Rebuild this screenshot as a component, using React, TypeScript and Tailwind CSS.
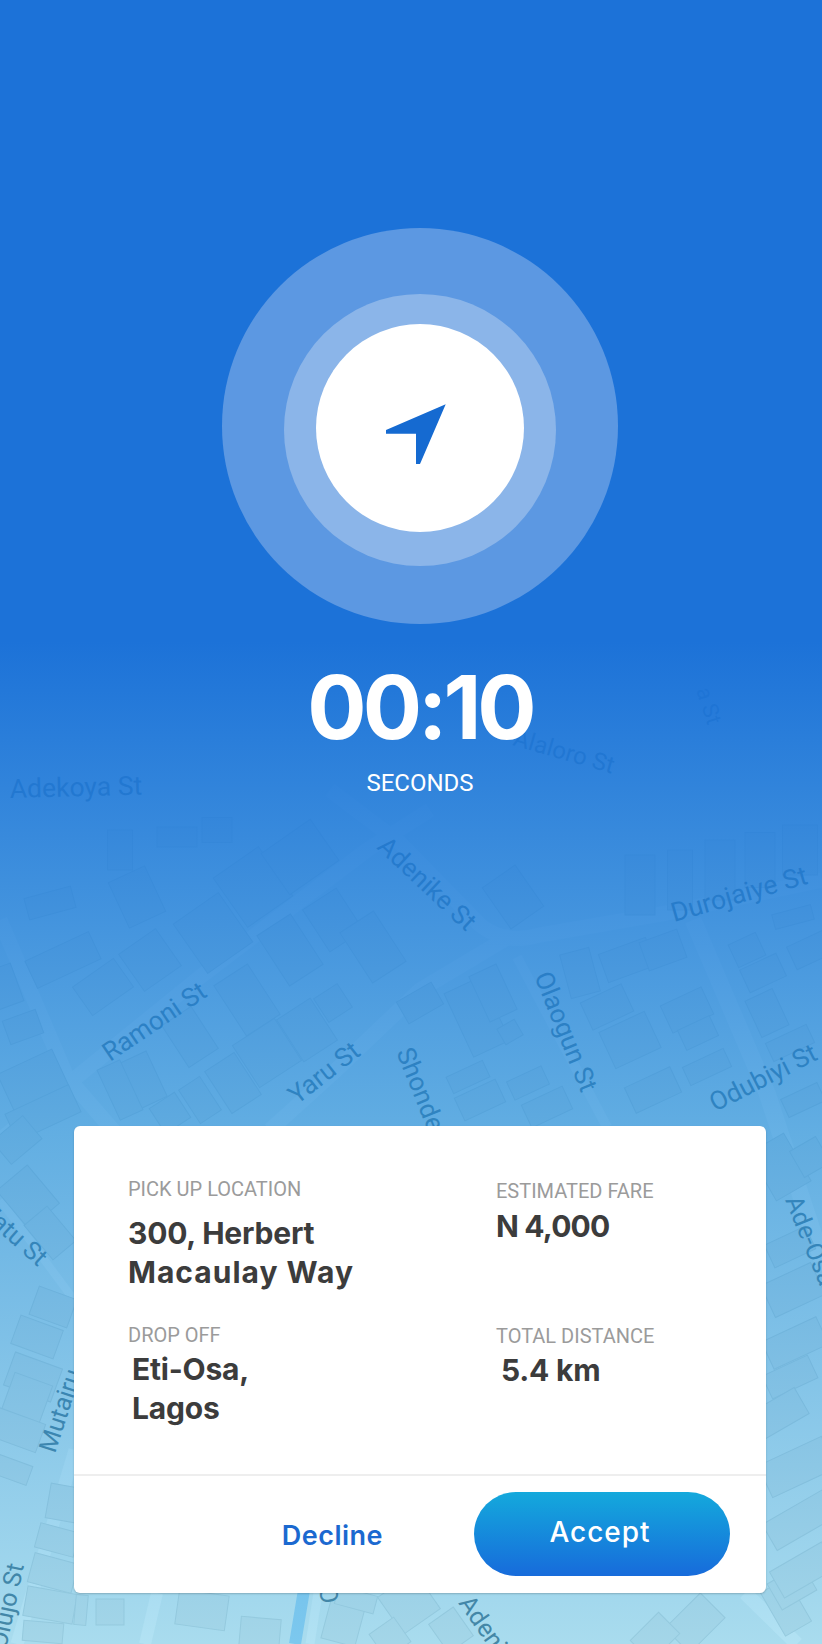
import React from 'react';

// [cx, cy, w, h, angle]
const buildings: number[][] = [
  [50, 903, 48, 22, -15], [63, 960, 70, 30, -25], [103, 987, 50, 35, -35], [150, 960, 45, 45, -35],
  [137, 897, 40, 50, -25], [213, 933, 55, 60, -35], [253, 887, 55, 60, -35], [300, 857, 60, 50, -35],
  [120, 850, 25, 40, 0], [177, 837, 40, 20, 0], [217, 830, 30, 25, 0],
  [247, 1000, 40, 60, -33], [290, 950, 40, 60, -33], [333, 920, 40, 50, -33], [373, 947, 40, 60, -33],
  [333, 1003, 28, 28, -33], [307, 1030, 40, 50, -33], [267, 1053, 50, 50, -33], [233, 1083, 35, 50, -33],
  [200, 1100, 25, 40, -33], [190, 1037, 35, 50, -33], [143, 1080, 30, 50, -25], [120, 1090, 25, 55, -25],
  [170, 1113, 30, 30, -33], [33, 1080, 60, 40, -25], [23, 1027, 35, 25, -20], [43, 1113, 70, 30, -25], [3, 987, 30, 40, -20],
  [420, 1003, 40, 25, -30], [477, 1017, 40, 70, -25], [510, 1032, 20, 18, -30], [493, 993, 30, 50, -25],
  [468, 1077, 40, 18, -25], [528, 1083, 38, 20, -25], [480, 1100, 45, 25, -25], [547, 1107, 45, 25, -25],
  [580, 973, 30, 45, -15], [627, 960, 50, 30, -20], [663, 950, 40, 30, -20], [607, 1007, 45, 30, -25],
  [630, 1040, 50, 40, -25], [687, 1010, 45, 30, -25], [698, 1033, 35, 22, -25], [707, 1067, 45, 20, -25],
  [653, 1090, 50, 28, -25], [763, 973, 40, 25, -25], [747, 950, 30, 25, -25], [767, 1013, 30, 40, -25],
  [790, 1043, 45, 20, -25], [793, 917, 40, 15, -15], [810, 950, 40, 25, -25], [803, 1100, 40, 20, -25],
  [640, 885, 30, 60, 0], [680, 880, 25, 60, 0], [720, 870, 30, 60, 0], [760, 860, 30, 55, 0], [800, 850, 35, 50, 0],
  [513, 897, 40, 50, -35], [28, 1197, 40, 50, -40], [17, 1140, 40, 30, -40], [50, 1233, 30, 45, -40],
  [53, 1307, 40, 30, 20], [37, 1337, 45, 30, 20], [33, 1377, 50, 35, 20], [27, 1398, 40, 40, 20], [17, 1430, 50, 30, 20],
  [13, 1470, 35, 20, 20], [63, 1503, 30, 35, 10], [57, 1540, 40, 25, 15], [53, 1573, 45, 30, 15], [50, 1605, 50, 30, 10], [43, 1632, 40, 20, 5],
  [110, 1612, 28, 26, 0], [81, 1610, 12, 30, 5], [202, 1610, 50, 35, 8], [260, 1633, 40, 30, 5], [343, 1623, 35, 40, 15],
  [356, 1600, 40, 18, 15], [409, 1603, 45, 45, -35], [451, 1630, 30, 35, -35], [390, 1638, 30, 30, -35],
  [695, 1623, 50, 35, -45], [655, 1637, 40, 30, -45], [786, 1607, 30, 50, -30], [792, 1587, 40, 30, -30],
  [780, 1167, 40, 55, -30], [810, 1157, 30, 30, -30], [790, 1247, 45, 25, -25], [793, 1290, 55, 35, -25],
  [795, 1343, 60, 30, -25], [790, 1377, 50, 25, -25], [780, 1413, 50, 30, -30], [797, 1467, 70, 35, -25],
  [800, 1520, 70, 30, -30], [803, 1570, 60, 30, -30],
];

const roads: { d: string; w: number }[] = [
  { d: 'M430 810 L367 850 L200 977 L73 1080 L0 1140', w: 15 },
  { d: 'M0 920 L67 1077 L130 1150', w: 15 },
  { d: 'M512 935 L420 990 L333 1073 L270 1130', w: 15 },
  { d: 'M330 790 L400 843 L480 925 Q505 945 540 935 L667 913 L822 880', w: 15 },
  { d: 'M693 920 L767 1093 L822 1260', w: 17 },
  { d: 'M517 957 L607 1127', w: 10 },
  { d: 'M75 1450 L17 1644', w: 13 },
  { d: 'M157 1593 L145 1644', w: 12 },
  { d: 'M318 1593 L310 1644', w: 9 },
  { d: 'M745 1593 L797 1644', w: 14 },
  { d: 'M0 1200 L74 1300', w: 8 },
];

// [text, x, y, rotation, size]
const labels: [string, number, number, number, number][] = [
  ['Adekoya St', 10, 798, -1.5, 26.5],
  ['Alaloro St', 512, 745, 16, 24],
  ['a St', 696, 690, 72, 22],
  ['Adenike St', 376, 848, 43, 26],
  ['Durojaiye St', 674, 922, -16, 26.5],
  ['Ramoni St', 110, 1062, -34, 26],
  ['Yaru St', 297, 1105, -38, 26],
  ['Shonde', 396, 1052, 68, 26],
  ['Olaogun St', 534, 976, 68, 26],
  ['Odubiyi St', 715, 1112, -27, 26],
  ['Ade-Osa', 785, 1200, 68, 25],
  ['Fatu St', -20, 1215, 42, 25],
  ['Mutairu', 55, 1454, -72, 25],
  ['Olujo St', 6, 1650, -78, 25],
  ['Bolaji O', 307, 1521, 80, 25],
  ['Adeniji', 458, 1603, 55, 25],
];

function MapBackground() {
  return (
    <svg className="absolute inset-0" width={822} height={1644} viewBox="0 0 822 1644" fill="none">
      {roads.map((r) => (
        <path key={r.d} d={r.d} stroke="#b2e2f3" strokeWidth={r.w} strokeLinejoin="round" />
      ))}
      <path d="M304 1590 L295 1644" stroke="#7cc8ee" strokeWidth={12} />
      {buildings.map(([cx, cy, w, h, a]) => (
        <rect
          key={`${cx}-${cy}`}
          x={cx - w / 2}
          y={cy - h / 2}
          width={w}
          height={h}
          fill="#a4d6e8"
          stroke="#97cbde"
          strokeWidth={1}
          transform={`rotate(${a} ${cx} ${cy})`}
        />
      ))}
      {labels.map(([t, x, y, r, s]) => (
        <text
          key={t}
          x={x}
          y={y}
          fontSize={s}
          fontFamily="Roboto, sans-serif"
          fill="#4487a6"
          transform={`rotate(${r} ${x} ${y})`}
        >
          {t}
        </text>
      ))}
    </svg>
  );
}

function Label({ children }: { children: React.ReactNode }) {
  return <div className="font-['Roboto',sans-serif] text-[20px] leading-[24px] text-[#9b9b9b]">{children}</div>;
}

function Value({ children, className }: { children: React.ReactNode; className?: string }) {
  return (
    <div className={`font-['Inter',sans-serif] text-[30px] leading-[39px] font-bold tracking-[-0.2px] text-[#3c3c3c] ${className ?? ''}`}>
      {children}
    </div>
  );
}

export default function App() {
  return (
    <div className="relative flex h-[1644px] w-[822px] flex-col overflow-hidden bg-[#a9dcee]">
      <MapBackground />
      {/* blue wash over the map */}
      <div className="absolute inset-0 bg-[linear-gradient(180deg,#1c72d8_0%,#1c72d8_39%,rgba(30,130,215,0.51)_69%,rgba(30,130,215,0)_100%)]" />

      <div className="relative flex flex-1 flex-col items-center pt-[228px] pb-[51px] pl-[18px]">
        <div className="flex h-[396px] w-[396px] items-center justify-center rounded-full bg-[#5c98e2]">
          <div className="mt-[8px] flex h-[272px] w-[272px] items-center justify-center rounded-full bg-[#8bb5e9]">
            <div className="mb-[4px] flex h-[208px] w-[208px] items-center justify-center rounded-full bg-white">
              <svg className="mt-[12px] mr-[8px]" width={60} height={60} viewBox="0 0 60 60">
                <polygon points="59.7,0.3 0,26 0,29.7 30,29.7 30,60 34,60" fill="#156ad1" />
              </svg>
            </div>
          </div>
        </div>

        <div className="mt-[38px] font-['Inter',sans-serif] text-[88px] leading-[90px] font-bold tracking-[-4px] text-white">
          00:10
        </div>
        <div className="mt-[17px] font-['Roboto',sans-serif] text-[24px] leading-[28px] text-white">SECONDS</div>

        <div className="mt-auto flex h-[467px] w-[692px] flex-col rounded-md bg-white shadow-[0_1px_2px_rgba(0,0,0,0.2)]">
          <div className="flex h-[350px] border-b-2 border-[#eeeeee] pt-[51px] pl-[54px]">
            <div className="w-[368px]">
              <Label>PICK UP LOCATION</Label>
              <Value className="mt-[13px]">
                300, Herbert
                <br />
                <span className="tracking-[1px]">Macaulay Way</span>
              </Value>
              <div className="mt-[31px]">
                <Label>DROP OFF</Label>
              </div>
              <Value className="mt-[3px] ml-[4px]">
                Eti-Osa,
                <br />
                Lagos
              </Value>
            </div>
            <div>
              <div className="pt-[2px]">
                <Label>ESTIMATED FARE</Label>
              </div>
              <Value className="mt-[4px] tracking-[-0.8px]">N 4,000</Value>
              <div className="mt-[78px]">
                <Label>TOTAL DISTANCE</Label>
              </div>
              <Value className="mt-[3px] ml-[5px]">5.4 km</Value>
            </div>
          </div>
          <div className="flex flex-1 items-center justify-end gap-[91px] pr-[36px] pb-[2px]">
            <button className="mt-[6px] font-['Inter',sans-serif] text-[27px] font-semibold tracking-[0.5px] text-[#1b69d0]">Decline</button>
            <button className="flex h-[84px] w-[256px] items-center justify-center rounded-full bg-[linear-gradient(180deg,#14a9dc,#176bdb)] pr-[4px] pb-[4px] font-['Inter',sans-serif] text-[28px] font-medium tracking-[1px] text-white">
              Accept
            </button>
          </div>
        </div>
      </div>
    </div>
  );
}
